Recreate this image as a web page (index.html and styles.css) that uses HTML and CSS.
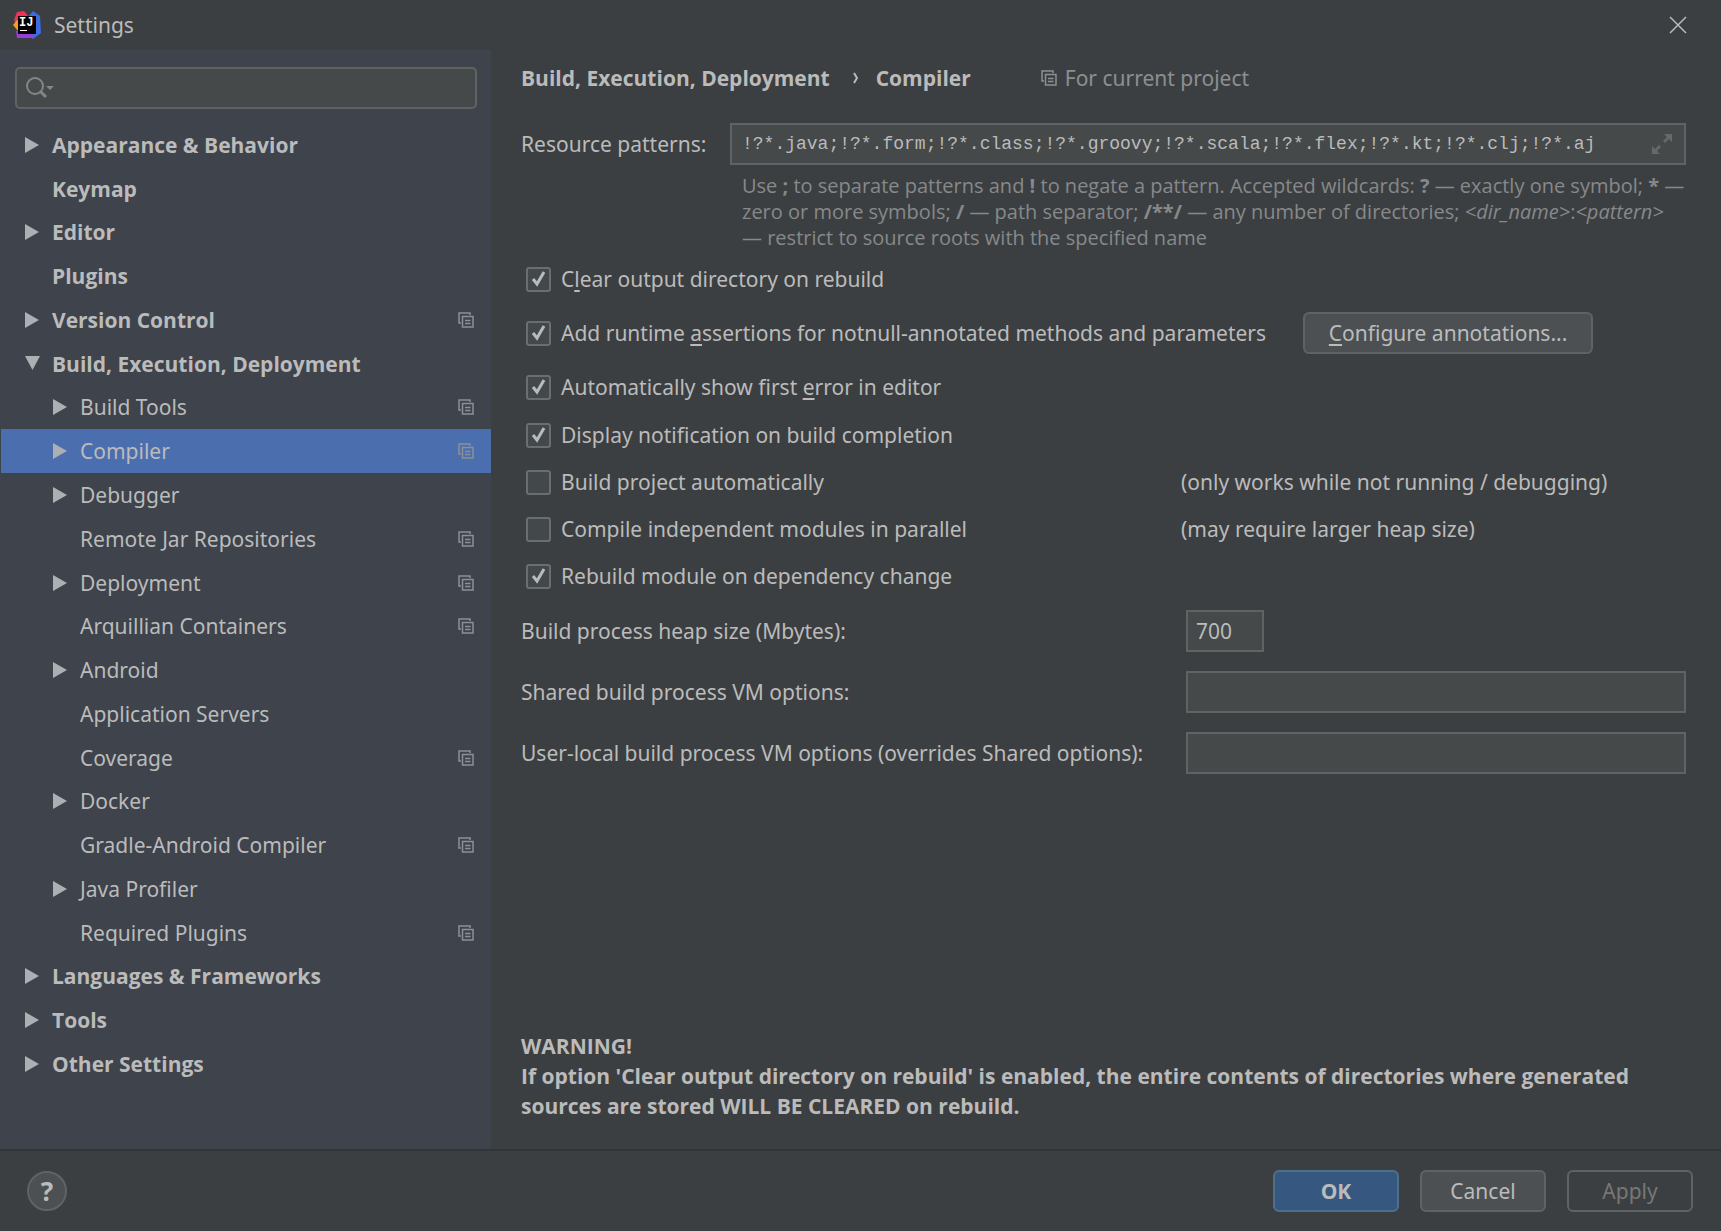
FILE: index.html
```html
<!DOCTYPE html>
<html lang="en">
<head>
    <meta charset="UTF-8">
    <meta name="viewport" content="width=device-width, initial-scale=1.0">
    <title>Settings</title>
    <link rel="stylesheet" href="styles.css">
</head>
<body>
    <!-- shared icons -->
    <svg class="sprite" aria-hidden="true">
        <symbol id="arrow-right" viewBox="0 0 16 16"><path d="M1 0L15 8L1 16Z" fill="currentColor"/></symbol>
        <symbol id="arrow-down" viewBox="0 0 16 16"><path d="M1 0H16L8.500 14Z" fill="currentColor"/></symbol>
        <symbol id="copy" viewBox="0 0 16 16">
            <path d="M3 11H1V1H12V3" fill="none" stroke="currentColor" stroke-width="1.500"/>
            <path d="M4.500 4.500H15V15H4.500ZM7 8.500H12.500M7 11.500H12.500" fill="none" stroke="currentColor" stroke-width="1.500"/>
        </symbol>
    </svg>

    <header class="titlebar">
        <svg class="logo" viewBox="0 0 28 28" aria-hidden="true">
            <path d="M4 1L11 0L16 6L10 14L3 13L1 9Z" fill="#f0325a"/>
            <path d="M0 14L4 9L8 13L5 20Z" fill="#fb9a1f"/>
            <path d="M16 5L20 0L27 5L28 22L20 28L14 24Z" fill="#3d6ce0"/>
            <path d="M3 20L10 20L22 25L18 27L4 27Z" fill="#9a3be0"/>
            <rect x="5" y="5" width="18" height="18" fill="#000"/>
            <text x="6" y="15" class="logo-text">IJ</text>
            <rect x="7" y="19" width="7" height="1" fill="#fff"/>
        </svg>
        <h1>Settings</h1>
        <button class="close" aria-label="Close">
            <svg viewBox="0 0 18 18"><path d="M1 1L17 17M17 1L1 17" stroke="currentColor" stroke-width="1.500"/></svg>
        </button>
    </header>

    <div class="content">
        <nav class="sidebar">
            <div class="search">
                <svg viewBox="0 0 28 22" aria-hidden="true">
                    <circle cx="9" cy="9" r="8" fill="none" stroke="currentColor" stroke-width="2"/>
                    <path d="M14 14L20 20" stroke="currentColor" stroke-width="3"/>
                    <path d="M20 9H28L24 13Z" fill="currentColor"/>
                </svg>
                <input type="text" aria-label="Search settings">
            </div>
            <ul class="tree">
                <li class="top"><svg class="arrow"><use href="#arrow-right"/></svg><a href="#">Appearance &amp; Behavior</a></li>
                <li class="top"><span class="arrow"></span><a href="#">Keymap</a></li>
                <li class="top"><svg class="arrow"><use href="#arrow-right"/></svg><a href="#">Editor</a></li>
                <li class="top"><span class="arrow"></span><a href="#">Plugins</a></li>
                <li class="top"><svg class="arrow"><use href="#arrow-right"/></svg><a href="#">Version Control</a><svg class="copy"><use href="#copy"/></svg></li>
                <li class="top"><svg class="arrow"><use href="#arrow-down"/></svg><a href="#">Build, Execution, Deployment</a></li>
                <li><svg class="arrow"><use href="#arrow-right"/></svg><a href="#">Build Tools</a><svg class="copy"><use href="#copy"/></svg></li>
                <li class="selected"><svg class="arrow"><use href="#arrow-right"/></svg><a href="#">Compiler</a><svg class="copy"><use href="#copy"/></svg></li>
                <li><svg class="arrow"><use href="#arrow-right"/></svg><a href="#">Debugger</a></li>
                <li><span class="arrow"></span><a href="#">Remote Jar Repositories</a><svg class="copy"><use href="#copy"/></svg></li>
                <li><svg class="arrow"><use href="#arrow-right"/></svg><a href="#">Deployment</a><svg class="copy"><use href="#copy"/></svg></li>
                <li><span class="arrow"></span><a href="#">Arquillian Containers</a><svg class="copy"><use href="#copy"/></svg></li>
                <li><svg class="arrow"><use href="#arrow-right"/></svg><a href="#">Android</a></li>
                <li><span class="arrow"></span><a href="#">Application Servers</a></li>
                <li><span class="arrow"></span><a href="#">Coverage</a><svg class="copy"><use href="#copy"/></svg></li>
                <li><svg class="arrow"><use href="#arrow-right"/></svg><a href="#">Docker</a></li>
                <li><span class="arrow"></span><a href="#">Gradle-Android Compiler</a><svg class="copy"><use href="#copy"/></svg></li>
                <li><svg class="arrow"><use href="#arrow-right"/></svg><a href="#">Java Profiler</a></li>
                <li><span class="arrow"></span><a href="#">Required Plugins</a><svg class="copy"><use href="#copy"/></svg></li>
                <li class="top"><svg class="arrow"><use href="#arrow-right"/></svg><a href="#">Languages &amp; Frameworks</a></li>
                <li class="top"><svg class="arrow"><use href="#arrow-right"/></svg><a href="#">Tools</a></li>
                <li class="top"><svg class="arrow"><use href="#arrow-right"/></svg><a href="#">Other Settings</a></li>
            </ul>
        </nav>

        <main class="page">
            <div class="breadcrumb">
                <h2>Build, Execution, Deployment</h2>
                <svg class="separator" viewBox="0 0 6 12" aria-hidden="true"><path d="M1 1L4 6L1 11" fill="none" stroke="currentColor" stroke-width="2"/></svg>
                <h2>Compiler</h2>
                <span class="scope"><svg class="copy"><use href="#copy"/></svg>For current project</span>
            </div>

            <div class="patterns">
                <label for="patterns">Resource patterns:</label>
                <div class="patterns-box">
                    <input type="text" id="patterns" value="!?*.java;!?*.form;!?*.class;!?*.groovy;!?*.scala;!?*.flex;!?*.kt;!?*.clj;!?*.aj">
                    <button aria-label="Expand">
                        <svg viewBox="0 0 24 24"><path d="M14 2H22V10L19 7L15 11L13 9L17 5ZM2 14L5 17L9 13L11 15L7 19L10 22H2Z" fill="currentColor"/></svg>
                    </button>
                </div>
                <p class="hint">Use <b>;</b> to separate patterns and <b>!</b> to negate a pattern. Accepted wildcards: <b>?</b> — exactly one symbol; <b>*</b> —<br>zero or more symbols; <b>/</b> — path separator; <b>/**/</b> — any number of directories; <i>&lt;dir_name&gt;</i>:<i>&lt;pattern&gt;</i><br>— restrict to source roots with the specified name</p>
            </div>

            <div class="checks">
                <label><input type="checkbox" checked><span>C<u>l</u>ear output directory on rebuild</span></label>
                <div class="check-row">
                    <label><input type="checkbox" checked><span>Add runtime <u>a</u>ssertions for notnull-annotated methods and parameters</span></label>
                    <button class="btn configure"><span><u>C</u>onfigure annotations...</span></button>
                </div>
                <label><input type="checkbox" checked><span>Automatically show first <u>e</u>rror in editor</span></label>
            </div>

            <div class="options">
                <label class="check"><input type="checkbox" checked><span>Display notification on build completion</span></label>
                <label class="check"><input type="checkbox"><span>Build project automatically</span></label>
                <span class="note">(only works while not running / debugging)</span>
                <label class="check"><input type="checkbox"><span>Compile independent modules in parallel</span></label>
                <span class="note">(may require larger heap size)</span>
                <label class="check"><input type="checkbox" checked><span>Rebuild module on dependency change</span></label>
            </div>

            <div class="fields">
                <label for="heap">Build process heap size (Mbytes):</label>
                <input type="text" id="heap" class="heap" value="700">
                <label for="shared">Shared build process VM options:</label>
                <input type="text" id="shared">
                <label for="local">User-local build process VM options (overrides Shared options):</label>
                <input type="text" id="local">
            </div>

            <p class="warning">WARNING!<br>If option 'Clear output directory on rebuild' is enabled, the entire contents of directories where generated sources are stored WILL BE CLEARED on rebuild.</p>
        </main>
    </div>

    <footer class="footer">
        <button class="help" aria-label="Help">?</button>
        <button class="btn primary">OK</button>
        <button class="btn">Cancel</button>
        <button class="btn" disabled>Apply</button>
    </footer>
</body>
</html>
```
FILE: styles.css
```css
* {
    box-sizing: border-box;
}

body {
    margin: 0;
    min-height: 100vh;
    display: flex;
    flex-direction: column;
    background-color: #3c3f41;
    color: #bbbbbb;
    font-family: "Noto Sans", "Open Sans", sans-serif;
    font-size: 21px;
    line-height: 30px;
}

h1, h2, p, ul {
    margin: 0;
    padding: 0;
}

button, input {
    font: inherit;
    color: inherit;
}

a {
    color: inherit;
    text-decoration: none;
}

u {
    text-underline-offset: 3px;
}

/* headings and bold rows */
h2, .tree .top, .warning, .btn.primary {
    font-family: "Open Sans", "Noto Sans", sans-serif;
    font-weight: bold;
}

.sprite {
    display: none;
}

/* title bar */
.titlebar {
    display: flex;
    align-items: center;
    height: 50px;
    padding: 0 34px 0 13px;
}

.titlebar h1 {
    margin-left: 13px;
    font-size: 21px;
    font-weight: normal;
}

.logo {
    width: 28px;
    height: 28px;
}

.logo-text {
    fill: #ffffff;
    font-family: "Liberation Mono", monospace;
    font-size: 12px;
    font-weight: bold;
}

.close {
    margin-left: auto;
    padding: 0;
    border: none;
    background: none;
}

.close svg {
    display: block;
    width: 18px;
    height: 18px;
}

.content {
    flex: 1;
    display: flex;
}

/* sidebar */
.sidebar {
    width: 491px;
    flex-shrink: 0;
    display: flex;
    flex-direction: column;
    padding: 17px 0 63px 1px;
    background-color: #3e434c;
}

.search {
    display: flex;
    align-items: center;
    height: 42px;
    margin: 0 14px;
    padding-left: 9px;
    border: 2px solid #5e6364;
    border-radius: 5px;
    background-color: #45494a;
    color: #80868a;
}

.search svg {
    width: 28px;
    height: 22px;
}

.search input {
    flex: 1;
    border: none;
    background: none;
}

.tree {
    flex: 1;
    display: flex;
    flex-direction: column;
    margin-top: 14px;
    list-style: none;
}

.tree li {
    flex: 1;
    display: flex;
    align-items: center;
    padding: 0 17px 0 51px;
}

.tree .top {
    padding-left: 23px;
}

.tree .selected {
    background-color: #4b6eaf;
}

.arrow {
    width: 16px;
    height: 16px;
    margin-right: 12px;
    color: #adb0b3;
}

.copy {
    width: 16px;
    height: 16px;
    color: #8b9196;
}

.tree .copy {
    margin-left: auto;
}

/* settings page */
.page {
    flex: 1;
    display: flex;
    flex-direction: column;
    padding: 13px 35px 28px 30px;
}

.breadcrumb {
    display: flex;
    align-items: center;
    margin-bottom: 30px;
}

.breadcrumb h2 {
    font-size: 21px;
}

.separator {
    width: 6px;
    height: 12px;
    margin: 0 17px 0 23px;
}

.scope {
    display: flex;
    align-items: center;
    gap: 8px;
    margin-left: 70px;
    color: #8c8f91;
}

.patterns {
    display: grid;
    grid-template-columns: 188px 1fr;
    column-gap: 21px;
    align-items: center;
}

.patterns-box {
    display: flex;
    align-items: center;
    height: 42px;
    padding: 0 10px;
    border: 2px solid #5e6364;
    background-color: #45494a;
}

.patterns-box input {
    flex: 1;
    min-width: 0;
    padding: 0;
    border: none;
    background: none;
    font-family: "Liberation Mono", monospace;
    font-size: 18px;
}

.patterns-box button {
    padding: 0;
    border: none;
    background: none;
    color: #66696b;
}

.patterns-box svg {
    display: block;
    width: 24px;
    height: 24px;
}

.hint {
    grid-column: 2;
    margin: 8px 0 0 12px;
    color: #86898b;
    font-family: "Open Sans", "Noto Sans", sans-serif;
    font-size: 20px;
    line-height: 26px;
    white-space: nowrap;
}

.checks label, .check {
    display: flex;
    align-items: center;
    gap: 10px;
    padding-left: 5px;
}

.checks {
    display: flex;
    flex-direction: column;
    gap: 18px;
    margin: 13px 0 18px;
}

.check-row {
    display: flex;
    align-items: center;
    gap: 37px;
}

input[type="checkbox"] {
    appearance: none;
    flex-shrink: 0;
    width: 25px;
    height: 25px;
    margin: 0;
    border: 2px solid #6b6e70;
    border-radius: 3px;
    background-color: #43494a;
}

input[type="checkbox"]:checked {
    background-image: url("data:image/svg+xml,%3Csvg xmlns='http://www.w3.org/2000/svg' viewBox='0 0 21 21'%3E%3Cpath d='M5 10L9 15L16 3' fill='none' stroke='%23b8bbbd' stroke-width='3'/%3E%3C/svg%3E");
}

.options {
    display: grid;
    grid-template-columns: 644px 1fr;
    column-gap: 16px;
    row-gap: 17px;
}

.check {
    grid-column: 1;
}

.note {
    grid-column: 2;
}

.fields {
    display: grid;
    grid-template-columns: 644px 1fr;
    gap: 19px 21px;
    align-items: center;
    margin-top: 19px;
}

.fields input {
    height: 42px;
    padding: 0 8px;
    border: 2px solid #5e6364;
    background-color: #45494a;
}

.fields .heap {
    width: 78px;
}

.warning {
    margin-top: auto;
}

/* buttons */
.btn {
    width: 126px;
    height: 42px;
    padding: 0;
    border: 2px solid #5e6364;
    border-radius: 6px;
    background-color: #4c5052;
}

.btn.configure {
    width: 290px;
}

.btn.primary {
    border-color: #4c708c;
    background-color: #365880;
}

.btn:disabled {
    background-color: transparent;
    color: #777777;
}

.footer {
    display: flex;
    align-items: center;
    gap: 21px;
    height: 82px;
    padding: 0 28px 0 27px;
    border-top: 2px solid #323537;
}

.help {
    width: 40px;
    height: 40px;
    margin-right: auto;
    padding: 0;
    border: 2px solid #5e6364;
    border-radius: 50%;
    background-color: #4c5052;
    font-size: 26px;
    font-weight: bold;
}
```
